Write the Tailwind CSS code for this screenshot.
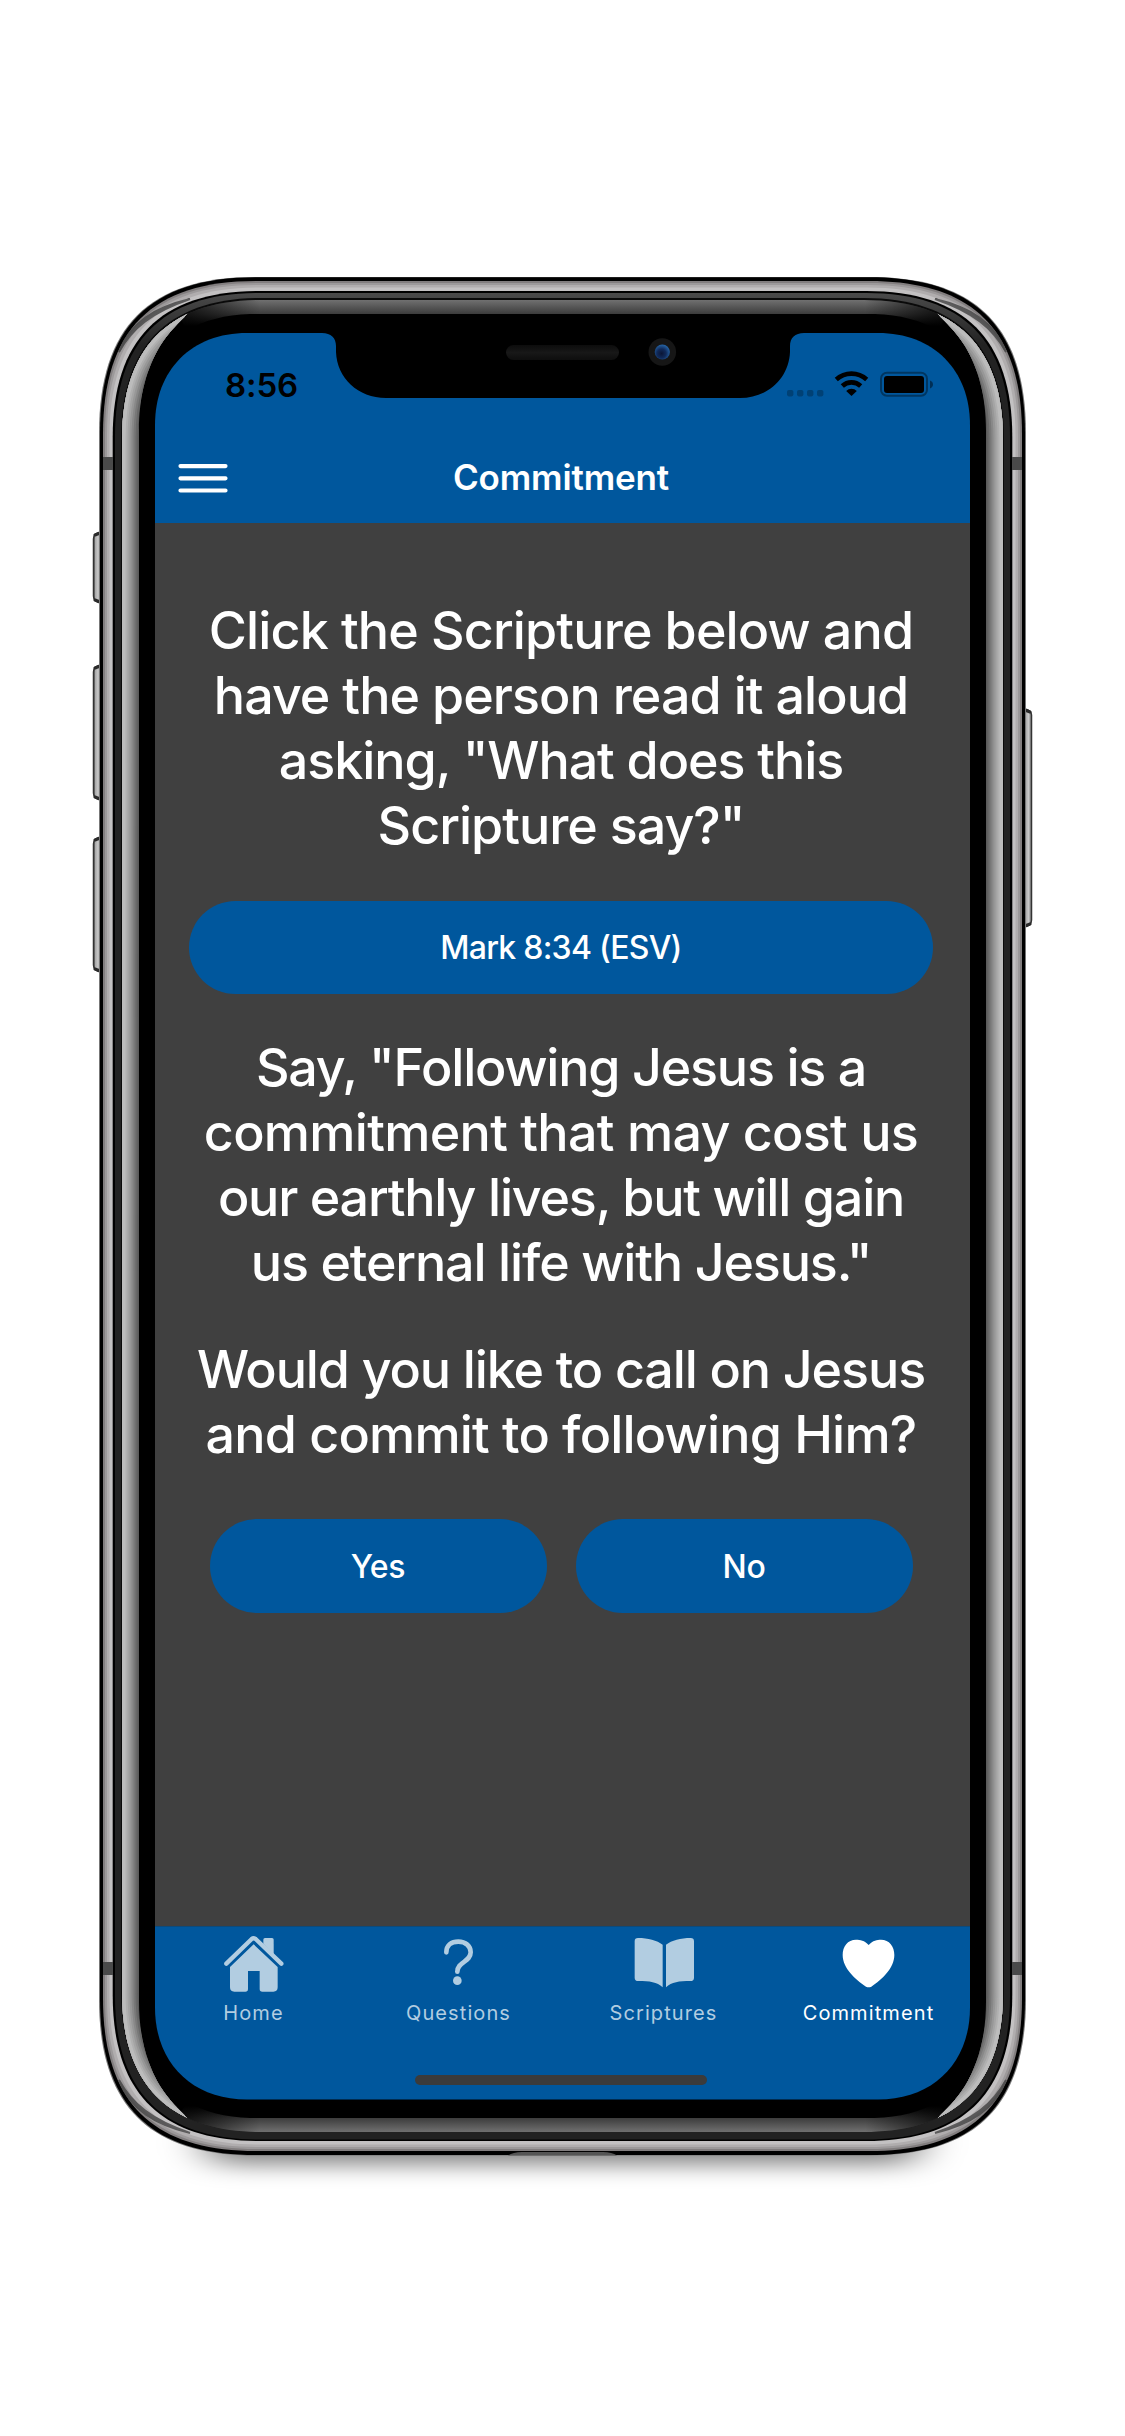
<!DOCTYPE html>
<html lang="en">
<head>
<meta charset="utf-8">
<title>Commitment</title>
<script src="https://cdn.jsdelivr.net/npm/@tailwindcss/browser@4"></script>
</head>
<body class="bg-white">
<main class="relative w-[1125px] h-[2436px] overflow-hidden bg-white font-['Inter','Liberation_Sans',sans-serif] text-white">

  <!-- App screen -->
  <section class="absolute left-[155px] top-[333px] w-[815px] h-[1767px] overflow-hidden bg-[#404040]">
    <div class="flex flex-col w-[820px] h-full -ml-[4px]">
      <header class="bg-[#00579d] h-[190px] shrink-0">
        <div class="h-[102px] flex items-center justify-between pl-[74px] pr-[38px]">
          <span class="pt-[2px] text-[33px] leading-none font-semibold text-black tracking-[-0.1px]">8:56</span>
          <svg width="148" height="28" viewBox="785 370 148 28">
            <g fill="#000" fill-opacity=".25"><rect x="787" y="390" width="6.4" height="6.4" rx="1.8"/><rect x="797" y="390" width="6.4" height="6.4" rx="1.8"/><rect x="807" y="390" width="6.4" height="6.4" rx="1.8"/><rect x="817" y="390" width="6.4" height="6.4" rx="1.8"/></g>
            <g fill="none" stroke="#000" stroke-width="4.6"><path d="M836.3 379.5A22.5 22.5 0 0 1 866.7 379.5"/><path d="M842.3 386A13.4 13.4 0 0 1 860.7 386"/></g>
            <path d="M851.5 396L846.2 391A7.6 7.6 0 0 1 856.8 391Z"/>
            <rect x="881" y="372.8" width="46" height="23" rx="6" fill="none" stroke="#000" stroke-opacity=".38" stroke-width="2"/>
            <rect x="884" y="376" width="40" height="17" rx="3"/>
            <path d="M930 380.6C934 382 934 387 930 388.4Z" fill-opacity=".45"/>
          </svg>
        </div>
        <div class="relative h-[84px] flex items-center justify-center">
          <svg class="absolute left-[27px] top-[28px]" width="50" height="30" viewBox="0 0 50 30" stroke="#fff" stroke-width="4.2" stroke-linecap="round"><path d="M2.5 3.1H47.5M2.5 15.3H47.5M2.5 27.5H47.5"/></svg>
          <h1 class="text-[35px] leading-none font-semibold tracking-[-0.15px]">Commitment</h1>
        </div>
      </header>

      <div class="flex-1 pt-[75px] text-center text-[52px] leading-[65px] font-medium whitespace-nowrap">
        <p>
          <span class="block tracking-[-0.85px]">Click the Scripture below and</span>
          <span class="block tracking-[-0.95px]">have the person read it aloud</span>
          <span class="block tracking-[-1.05px]">asking, "What does this</span>
          <span class="block tracking-[-1px]">Scripture say?"</span>
        </p>
        <button class="mt-[43px] mx-auto block w-[744px] h-[93px] pt-[1px] rounded-full bg-[#00579d] text-[32px] leading-none font-medium tracking-[-0.75px]">Mark 8:34 (ESV)</button>
        <p class="mt-[41px]">
          <span class="block tracking-[-1.2px]">Say, "Following Jesus is a</span>
          <span class="block tracking-[-0.7px]">commitment that may cost us</span>
          <span class="block tracking-[-1.2px]">our earthly lives, but will gain</span>
          <span class="block tracking-[-1.15px]">us eternal life with Jesus."</span>
        </p>
        <p class="mt-[42px]">
          <span class="block tracking-[-1.1px]">Would you like to call on Jesus</span>
          <span class="block tracking-[-0.8px]">and commit to following Him?</span>
        </p>
        <div class="mt-[52px] flex justify-center gap-[29px] text-[32px] leading-none tracking-[-0.3px]">
          <button class="w-[337px] h-[94px] pt-[2px] rounded-full bg-[#00579d] font-medium">Yes</button>
          <button class="w-[337px] h-[94px] pt-[2px] rounded-full bg-[#00579d] font-medium">No</button>
        </div>
      </div>

      <nav class="bg-[#00579d] h-[174px] shrink-0 border-t border-[#0d4a7b]">
        <div class="grid grid-cols-4 text-[20px] leading-none font-normal text-[#b2cde1] tracking-[1.1px]">
          <div class="flex flex-col items-center pt-[8px]">
            <svg width="60" height="58" viewBox="434 105 180 174" fill="#b2cde1"><path d="M441 191L517 117Q523 112 529 117L606 191" fill="none" stroke="#b2cde1" stroke-width="13" stroke-linecap="round"/><path d="M552 131V119Q552 114 557 114H578Q583 114 583 119V164Z"/><path d="M523 133L595 201V262Q595 275 582 275H549Q541 275 541 267V213H506V267Q506 275 498 275H465Q452 275 452 262V201Z"/></svg>
            <span class="mt-[10px]">Home</span>
          </div>
          <div class="flex flex-col items-center pt-[8px]">
            <svg width="60" height="58" viewBox="177 77 180 174"><path d="M229 129C229 108 244 97 265 97C287 97 302 110 302 129C302 158 262 157 262 187" fill="none" stroke="#b2cde1" stroke-width="14" stroke-linecap="round"/><circle cx="262" cy="214" r="13" fill="#b2cde1"/></svg>
            <span class="mt-[10px]">Questions</span>
          </div>
          <div class="flex flex-col items-center pt-[8px]">
            <svg width="60" height="58" viewBox="793 75 180 174" fill="#b2cde1"><path d="M795 94Q795 84 805 84C835 84 862 91 879 104V232C862 216 840 213 806 213Q795 213 795 203Z"/><path d="M973 94Q973 84 963 84C933 84 906 91 889 104V232C906 216 928 213 962 213Q973 213 973 203Z"/></svg>
            <span class="mt-[10px]">Scriptures</span>
          </div>
          <div class="flex flex-col items-center pt-[8px] text-white">
            <svg width="60" height="58" viewBox="296 106 180 174" fill="#fff"><path d="M385 136C372 122 360 120 347 120C322 120 307 140 307 166C307 205 345 240 377 261Q385 265 393 261C425 240 462 205 462 166C462 140 447 120 422 120C410 120 398 122 385 136Z"/></svg>
            <span class="mt-[10px]">Commitment</span>
          </div>
        </div>
        <div class="mx-auto mt-[52px] w-[292px] h-[10px] rounded-full bg-[#3b3b3b]"></div>
      </nav>
    </div>
  </section>

  <!-- Phone body, drawn over the edges of the screen -->
  <svg class="absolute inset-0 pointer-events-none" width="1125" height="2436" viewBox="0 0 1125 2436">
    <defs>
      <linearGradient id="gTop" gradientUnits="userSpaceOnUse" x1="0" y1="300" x2="0" y2="326"><stop offset="0" stop-color="#707070"/><stop offset=".54" stop-color="#3c3c3c"/><stop offset="1" stop-color="#000"/></linearGradient>
      <linearGradient id="gFade" gradientUnits="userSpaceOnUse" x1="182" y1="0" x2="260" y2="0"><stop offset="0" stop-color="#000" stop-opacity=".75"/><stop offset="1" stop-color="#000" stop-opacity="0"/></linearGradient>
      <linearGradient id="gLip" gradientUnits="userSpaceOnUse" x1="0" y1="293" x2="0" y2="345"><stop offset="0" stop-color="#4a4a4a"/><stop offset="1" stop-color="#222"/></linearGradient>
      <linearGradient id="gBtn"><stop offset="0" stop-color="#333"/><stop offset=".25" stop-color="#aaa"/><stop offset=".6" stop-color="#c8c8c8"/><stop offset="1" stop-color="#777"/></linearGradient>
      <linearGradient id="gSpk" x1="0" y1="0" x2="0" y2="1"><stop offset="0" stop-color="#0c0c0c"/><stop offset=".5" stop-color="#181818"/><stop offset="1" stop-color="#0e0e0e"/></linearGradient>
      <radialGradient id="gCam" cx=".45" cy=".6" r=".6"><stop offset="0" stop-color="#0a1535"/><stop offset=".5" stop-color="#102a5a"/><stop offset="1" stop-color="#2766a8"/></radialGradient>
      <filter id="soft" x="-10%" y="-150%" width="120%" height="400%"><feGaussianBlur stdDeviation="22 11"/></filter>
      <mask id="hole" maskUnits="userSpaceOnUse" x="0" y="0" width="1125" height="2436"><rect width="1125" height="2436" fill="#fff"/><path data-r="155 333 2099.5 92 .6" fill="#000"/></mask>
      <clipPath id="glass"><path data-r="122 300 2131 139 .66"/></clipPath>
      <clipPath id="glare"><path d="M110 1217V290H180L188 313C178 324 170 330 160 346C147 368 139 395 139 431V1217Z"/></clipPath>
      <g id="corner">
        <path d="M119 352C132 328 152 312 190 299C156 307 130 322 119 352Z" fill="#444" stroke="#444" stroke-width="2" opacity=".8"/>
        <g clip-path="url(#glass)">
          <path d="M187 290H563V314H250C225 315 205 320 187 330L180 318Z" fill="url(#gTop)"/>
          <path d="M180 290H262V340H180Z" fill="url(#gFade)"/>
          <g clip-path="url(#glare)" fill="none">
            <path data-r="122 300 2131 139 .66" stroke="#5a5a5a" stroke-width="70"/>
            <path data-r="122 300 2131 139 .66" stroke="#686868" stroke-width="31"/>
            <path data-r="122 300 2131 139 .66" stroke="#787878" stroke-width="27"/>
            <path data-r="122 300 2131 139 .66" stroke="#888" stroke-width="23"/>
            <path data-r="122 300 2131 139 .66" stroke="#979797" stroke-width="19"/>
            <path data-r="122 300 2131 139 .66" stroke="#a4a4a4" stroke-width="15"/>
            <path data-r="122 300 2131 139 .66" stroke="#b0b0b0" stroke-width="11"/>
            <path data-r="122 300 2131 139 .66" stroke="#bcbcbc" stroke-width="7"/>
          </g>
        </g>
        <rect x="103" y="457" width="10" height="13" fill="#4a4a4a"/>
      </g>
    </defs>
    <g mask="url(#hole)">
      <rect x="205" y="2120" width="715" height="44" rx="20" fill="#000" fill-opacity=".5" filter="url(#soft)"/>
      <!-- side keys -->
      <g fill="url(#gBtn)" stroke="#333" stroke-width="1.5">
        <path d="M101 532Q93.500 533 93.500 539V596Q93.500 602 101 603Z"/>
        <path d="M101 665Q93.500 666 93.500 672V793Q93.500 799 101 800Z"/>
        <path d="M101 837Q93.500 838 93.500 844V965Q93.500 971 101 972Z"/>
        <path d="M1024 709Q1031.500 710 1031.500 715V920Q1031.500 926 1024 927Z"/>
      </g>
      <g stroke="#2a2a2a" stroke-width="3" stroke-linecap="round">
        <path d="M95 535L100 533M95 600L100 602M95 668L100 666M95 797L100 799M95 840L100 838M95 969L100 971M1030 712L1025 710M1030 924L1025 926"/>
      </g>
      <!-- metal band, from the outer edge inwards -->
      <path data-r="99 277 2155.5 156 .68" fill="#777"/>
      <path data-r="100 277.3 2155 156 .68" fill="#000"/>
      <path data-r="103 281 2151 153 .68" fill="#827e7f"/>
      <path data-r="105 283 2149 151 .68" fill="#9c999a"/>
      <path data-r="107 285 2147 150 .68" fill="#b0adae"/>
      <path data-r="109.500 287.5 2144.5 148 .67" fill="#c3c1c2"/>
      <path data-r="112.700 291 2141 146 .67" fill="#000"/>
      <path data-r="115 293 2139.500 144 .67" fill="url(#gLip)"/>
      <path data-r="121 298 2132 140 .66" fill="#0a0a0a"/>
      <path data-r="122 300 2131 139 .66" fill="#000"/>
      <use href="#corner"/>
      <use href="#corner" transform="translate(1125 0) scale(-1 1)"/>
      <use href="#corner" transform="translate(0 2432) scale(1 -1)"/>
      <use href="#corner" transform="translate(1125 2432) scale(-1 -1)"/>
      <path d="M508 2155.500Q513 2152 522 2152H603Q612 2152 617 2155.500Z" fill="#555"/>
    </g>
    <path d="M322 332V333C331 333 336 338 336 346V352C337 378 358 398 386 398H740C768 398 789 378 790 352V346C790 338 795 333 804 333V332Z" fill="#000"/>
    <rect x="506" y="345" width="113" height="15" rx="7.500" fill="url(#gSpk)"/>
    <circle cx="662.300" cy="352" r="13.800" fill="#161616"/>
    <circle cx="662.300" cy="352" r="7.600" fill="url(#gCam)"/>
  </svg>
</main>
<script>
  // Symmetric body outlines: data-r holds "left top bottom cornerSize curvature".
  document.querySelectorAll('path[data-r]').forEach(p => {
    const [l, t, b, R, k] = p.dataset.r.split(' ').map(Number);
    const r = 1125 - l, c = R * (1 - k);
    p.setAttribute('d', `M${l + R} ${t}H${r - R}C${r - c} ${t} ${r} ${t + c} ${r} ${t + R}V${b - R}C${r} ${b - c} ${r - c} ${b} ${r - R} ${b}H${l + R}C${l + c} ${b} ${l} ${b - c} ${l} ${b - R}V${t + R}C${l} ${t + c} ${l + c} ${t} ${l + R} ${t}Z`);
  });
</script>
</body>
</html>
